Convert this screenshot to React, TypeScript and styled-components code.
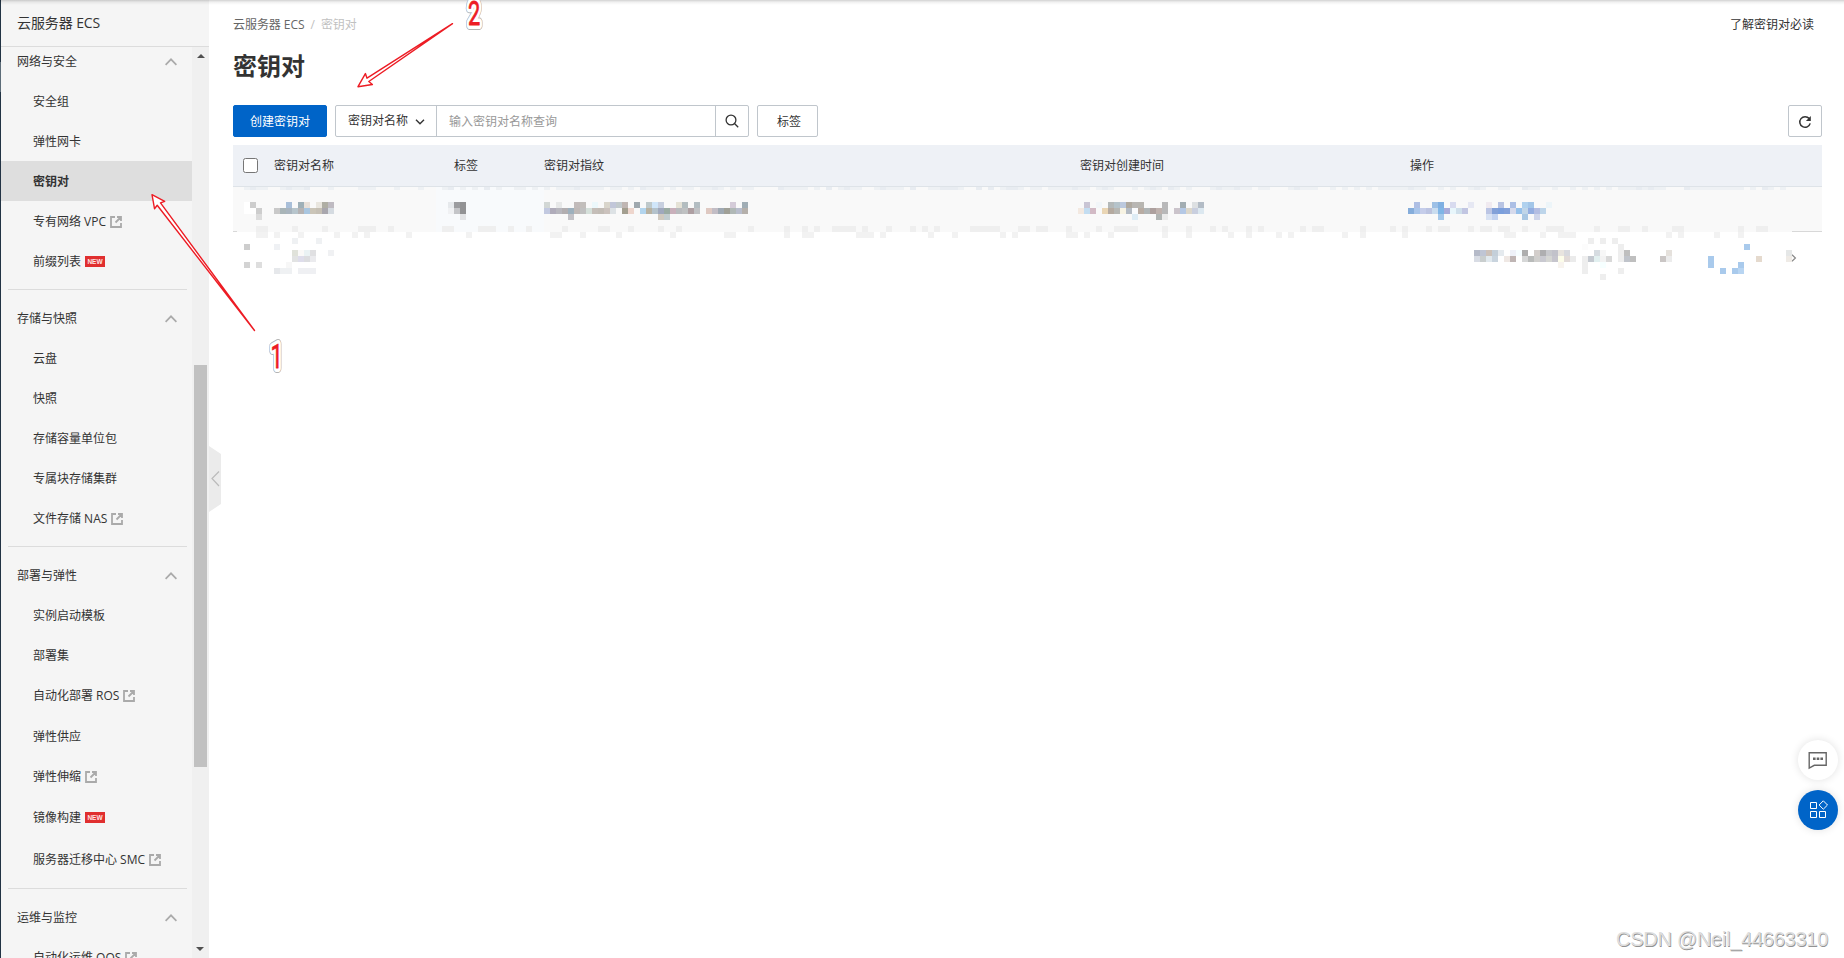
import React from "react";
import styled, { createGlobalStyle, css } from "styled-components";

const GlobalStyle = createGlobalStyle`
  * { box-sizing: border-box; }
  body {
    margin: 0;
    background: #fff;
    color: #333;
    font: 12px/20px "Open Sans", "Noto Sans CJK SC", sans-serif;
    overflow: hidden;
  }
  button, input { font: inherit; color: inherit; }
`;

const Page = styled.div`
  position: relative;
  display: flex;
  height: 958px;
  width: 1844px;
  overflow: hidden;
`;

const TopShadow = styled.div`
  position: absolute;
  inset: 0 0 auto 0;
  height: 5px;
  background: linear-gradient(rgba(0, 0, 0, 0.18), rgba(0, 0, 0, 0.06) 40%, rgba(0, 0, 0, 0));
`;

const Rail = styled.div`
  width: 1px;
  background: linear-gradient(#223344 62px, #5c6c78 62px, #5c6c78 92px, #223344 92px);
`;

const Sidebar = styled.aside`
  width: 208px;
  display: flex;
  flex-direction: column;
  background: #f5f5f5;
`;

const SidebarTitle = styled.div`
  height: 47px;
  padding: 13px 0 0 16px;
  font-size: 14px;
  letter-spacing: -0.1px;
  border-bottom: 1px solid #dcdcdc;
`;

const SidebarBody = styled.div`
  flex: 1;
  min-height: 0;
  display: flex;
`;

const Nav = styled.nav`
  width: 191px;
  overflow: hidden;
`;

const NavList = styled.div`
  margin-top: -5px;
`;

const NavHeader = styled.div`
  height: 40px;
  padding: 0 15px 0 16px;
  display: flex;
  align-items: center;
  justify-content: space-between;
`;

const NavItem = styled.div<{ $active?: boolean; $height?: number }>`
  height: ${(p) => p.$height ?? 40}px;
  padding-left: 32px;
  display: flex;
  align-items: center;
  gap: 4px;
  white-space: nowrap;
  ${(p) =>
    p.$active &&
    css`
      margin: -1px 0 1px;
      padding-top: 1px;
      background: #dedede;
      font-weight: 600;
    `}
`;

const NavDivider = styled.div`
  height: 1px;
  margin: 7px 5px 9px 7px;
  background: #dcdcdc;
`;

const NewBadge = styled.span`
  width: 20px;
  height: 11px;
  margin-top: -1px;
  background: #e02f2f;
  color: #ffe3e3;
  font: 700 6.5px/11px "Liberation Sans", sans-serif;
  text-align: center;
`;

const Scrollbar = styled.div`
  width: 17px;
  display: flex;
  flex-direction: column;
  align-items: center;
  background: #f0f0f0;
`;

const ScrollArrow = styled.div<{ $down?: boolean }>`
  width: 17px;
  height: 17px;
  display: flex;
  justify-content: center;
  align-items: center;
  transform: ${(p) => (p.$down ? "rotate(180deg)" : "none")};
`;

const ScrollTrack = styled.div`
  flex: 1;
  padding-top: 301px;
`;

const ScrollThumb = styled.div`
  width: 13px;
  height: 402px;
  background: #c1c1c1;
`;

const CollapseHandle = styled.div`
  position: absolute;
  left: 209px;
  top: 446px;
  height: 66px;
`;

const Main = styled.main`
  flex: 1;
  padding: 15px 22px 0 24px;
`;

const TopLine = styled.div`
  display: flex;
  justify-content: space-between;
  height: 20px;
  padding-right: 8px;
`;

const Breadcrumb = styled.div`
  color: #666;
  letter-spacing: -0.05px;
  span { color: #c1c1c1; }
  i { color: #c1c1c1; font-style: normal; margin: 0 6px; }
`;

const Title = styled.h1`
  margin: 11px 0 19px;
  font-size: 24px;
  line-height: 40px;
  font-weight: 700;
`;

const Toolbar = styled.div`
  display: flex;
  align-items: center;
  height: 32px;
`;

const Button = styled.button<{ $primary?: boolean; $width: number }>`
  width: ${(p) => p.$width}px;
  height: 32px;
  padding: 1px 0 0;
  display: flex;
  align-items: center;
  justify-content: center;
  border-radius: 2px;
  border: 1px solid ${(p) => (p.$primary ? "#0064c8" : "#c0c6cc")};
  background: ${(p) => (p.$primary ? "#0064c8" : "#fff")};
  color: ${(p) => (p.$primary ? "#fff" : "#333")};
`;

const TagButton = styled(Button)`
  padding-left: 3px;
`;

const SearchGroup = styled.div`
  width: 414px;
  height: 32px;
  margin: 0 8px;
  display: flex;
  border: 1px solid #c0c6cc;
  border-radius: 2px;
`;

const FieldSelect = styled.div`
  width: 101px;
  padding: 0 11px 1px 12px;
  display: flex;
  align-items: center;
  justify-content: space-between;
  border-right: 1px solid #c0c6cc;
  svg { margin-top: 3px; }
`;

const SearchInput = styled.input`
  flex: 1;
  min-width: 0;
  padding: 2px 11px 0 12px;
  border: 0;
  outline: 0;
  background: none;
  &::placeholder { color: #999; }
`;

const SearchButton = styled.div`
  width: 33px;
  display: flex;
  align-items: center;
  justify-content: center;
  border-left: 1px solid #c0c6cc;
`;

const Spacer = styled.div`
  flex: 1;
`;

const Table = styled.div`
  margin-top: 8px;
`;

const TableHead = styled.div`
  display: grid;
  grid-template-columns: 41px 180px 90px 536px 330px 1fr;
  align-items: center;
  height: 42px;
  background: #eef1f6;
  border-bottom: 1px solid #dee3e8;
  span { padding-top: 1px; }
`;

const Checkbox = styled.input`
  appearance: none;
  width: 15px;
  height: 15px;
  margin: 0 0 0 10px;
  display: block;
  background: #fff;
  border: 1px solid #767676;
  border-radius: 2.5px;
`;

const TableBody = styled.div`
  position: relative;
`;

const TableRow = styled.div`
  height: 45px;
  background:
    linear-gradient(#d8d8d8, #d8d8d8) left bottom / 4px 1px no-repeat,
    linear-gradient(#d8d8d8, #d8d8d8) right bottom / 30px 1px no-repeat,
    #f9f9f9;
`;

const RowPager = styled.div`
  height: 45px;
  padding: 22px 25px 0 0;
  display: flex;
  justify-content: flex-end;
`;

const Mosaic = styled.svg`
  position: absolute;
  left: -13px;
  top: 0;
`;

const Annotations = styled.svg`
  position: absolute;
  left: 0;
  top: 0;
  pointer-events: none;
`;

const FloatingActions = styled.div`
  position: absolute;
  right: 6px;
  top: 740px;
  display: flex;
  flex-direction: column;
  gap: 10px;
`;

const RoundAction = styled.div<{ $primary?: boolean }>`
  width: 40px;
  height: 40px;
  border-radius: 50%;
  display: flex;
  align-items: center;
  justify-content: center;
  background: ${(p) => (p.$primary ? "#0064c8" : "#fff")};
  box-shadow: 0 0 8px rgba(0, 0, 0, 0.12);
`;

const Watermark = styled.div`
  position: absolute;
  right: 16px;
  top: 926px;
  font: 20px/26px "Liberation Sans", sans-serif;
  letter-spacing: -0.27px;
  color: #dedede;
  text-shadow: 0.7px 0.7px 0 #929292;
`;

const ExternalIcon = () => (
  <svg width="12" height="12" viewBox="0 0 12 12" fill="none" stroke="#aaa" strokeWidth="1.8">
    <path d="M5 1H1v10h10V7M7 1h4v4M11 1 5.5 6.5" />
  </svg>
);

const FoldIcon = () => (
  <svg width="12" height="8" viewBox="0 0 12 8" fill="none" stroke="#aaa" strokeWidth="1.7">
    <path d="M.6 6.8 6 1.3l5.4 5.5" />
  </svg>
);

type Item = { label: string; external?: boolean; fresh?: boolean; active?: boolean; height?: number };
const sections: { title: string; items: Item[] }[] = [
  {
    title: "网络与安全",
    items: [
      { label: "安全组" },
      { label: "弹性网卡" },
      { label: "密钥对", active: true },
      { label: "专有网络 VPC", external: true },
      { label: "前缀列表", fresh: true },
    ],
  },
  {
    title: "存储与快照",
    items: [
      { label: "云盘" },
      { label: "快照" },
      { label: "存储容量单位包" },
      { label: "专属块存储集群" },
      { label: "文件存储 NAS", external: true },
    ],
  },
  {
    title: "部署与弹性",
    items: [
      { label: "实例启动模板" },
      { label: "部署集" },
      { label: "自动化部署 ROS", external: true },
      { label: "弹性供应", height: 41 },
      { label: "弹性伸缩", external: true },
      { label: "镜像构建", fresh: true, height: 42 },
      { label: "服务器迁移中心 SMC", external: true, height: 42 },
    ],
  },
  { title: "运维与监控", items: [{ label: "自动化运维 OOS", external: true }] },
];

/* Redaction mosaic on a 6px grid: [row, first column, cell colours]; "-" leaves a cell clear. */
const blocks: [number, number, string][] = [
  [10, 4, "fff cdcdcd"],
  [11, 4, "fff fff cdcdcd"],
  [12, 6, "dcdcdc"],
  [10, 11, "a9bfd9 - 9fb0b8 e8e0d9 - e9e6df afaea4 bfbbc2"],
  [11, 9, "c9c9c9 a9b5b8 a9b5bf b7c5cc b5b3b4 a9c6e0 cbc5b8 c6c0b5 a9a7ae d5dbe1"],
  [10, 38, "e6e9ec 9b9c9f 929294"],
  [11, 38, "f0f1f3 c4c5c8 929294"],
  [12, 40, "e2e3e5"],
  [10, 54, "d2d7d5 - e7e8e8 - - c2bbba c2bebb - ecf8fb - d9d5cb c2c7d9 c2cacd c0b6b3 - 9fa8ae - bfc9cb d0e6fa c7cfdf - - e5e2d6 b3bdc0 - b3bdc2 - - - - - d4cbd8 - a0adb5"],
  [11, 54, "c2c9e0 b0acba b8b7be b2aeb0 9db0bd bfb9b7 c0c0c0 d5e0da c5beb8 c2bcb5 cbc2bd dde2e5 - a39f90 eed6cd - b3d5ee b8b2a2 b4c2cb 9fa8bd 9aaba3 c9b0bb b9bbbe bfc1c2 ae9fa2 c0c1c4 - dfc9c2 c2bdc5 9fa9b3 a0a097 b0b8b6 b8bdcc b5b0ab"],
  [12, 58, "c3c2c7"],
  [12, 73, "d0c9bf c2cdd0"],
  [10, 144, "c9c5d4 - f2f6f9 - b4b9b9 b5c3ca bcc9de afa9a0 b8b6b3 b8b6b1 - - - b8b8b9 - - a2adb2 - dde0e2 b3bcc6"],
  [11, 143, "f3e9e1 c3ddf1 d2bac5 - ead6b5 b5aaa0 b7b7b3 f7f3e3 b3bac3 fafbfd b8aca3 b0b5b6 ada09e bfb2ae b8b8b9 - cbc4cb b4c8e5 dcd7cb c9cfdf dce8f0"],
  [12, 152, "deecf5 - - - b1b5b4 ebebeb"],
  [10, 199, "aebfe4 - - 9dc0e6 7fb0e2 - d8dbef - - e6e8f3 - - f0eaf0 - b8c4e3 - acbfe5 - b0d1ee a3c6e8 - - edf5f9"],
  [11, 198, "85addb a9c5ea c5cdea bcc4e2 c9dcef 7fb5e6 a9acda e8f6fb cfdfeb c2c6e2 - - - bbc5e4 83a1d8 7b9fdc 83a1da d6daec 96c0ea c0d5e8 93ade0 b3bde2 bdd5ea"],
  [12, 203, "a5c8ea - - - - - - - d8e2f3 c3d3f0 - - - - a9c7e3 - cfd5ea"],
  [16, 12, "eff1f3 - - - eff1f3"],
  [16, 228, "eeeeee - eeeeee - eeeeee"],
  [17, 4, "cdcdcd - - - - eff1f4"],
  [17, 227, "fcfcfc - - - - - eeeeee"],
  [17, 254, "a9caec"],
  [18, 12, "e0e2da faf9f8 eaf2f4 e0e0e2 - - f0f1f3"],
  [18, 209, "b5bac8 bfc5d4 ccc1b9 c4cfd9 e5eaee - eef1f8 f6fdff aeaeae - d3cecb aeaeb0 c8c9cd c2c2ca e8e4df d8d9de - - - - d6dce1 f7f7f7 - - eeeeee bfbfbf - - - - - - e5e1dc"],
  [18, 261, "e5e7e7"],
  [19, 12, "e2e3e3 deddeb dcdde0 ebebee"],
  [19, 209, "d8dce4 c9cece e1e9ee c9d4de - efe8e4 bfb5b4 - d6d7d7 b9bbba d0cfcd c9c9d0 d5d6d3 c6c5cd fdfdea e1dad8 ebebeb - eeeeee c4c9d0 e2f0f0 f3f3f3 d9d9d9 - eeeeee c0c4cb bfbfbf - - - - cac6c5 ececec - - - - - - a9caec - - - - - - - e5dace - - - - efebe6"],
  [20, 4, "d3d3d3 - dedede - - - - f7f7f7"],
  [20, 223, "f8f4ef - - - eeeeee - - f6ffff"],
  [20, 248, "a9caec - - - - a9caec"],
  [21, 9, "e6e8eb eff1f3 eff1f3 - eff0f3 eff0f3 eff0f3"],
  [21, 227, "eeeeee - - - - - eeeeee"],
  [21, 250, "a9caec - a9caec b8d5f2"],
  [22, 230, "eeeeee"],
];

/* Dashed leftovers of the row edges: column ranges per mosaic row. */
const edges: [number, string, string][] = [
  [7, "#eef1f4", "4-7 10-14 18 23-25 29 33 37-38 40 42 44 46 49-50 52 54 56-63 65-66 68 70-73 75 77-78 80-83 85 87-88 93-97 99 101 103-106 109-113 115 118-123 126 128 130-133 135-136 138-144 146-148 152 154-156 158-159 161 165-171 173-174 178-182 185 187 189 191 193-200 203 205 208-210 213-214 217-219 222 225 227 229 231 233-240 244-253 255 257-258 260"],
  [7, "#e8ecf1", "5 11 14 38 44 59 70 82 93 101 104 110 115 120-122 126 128 131-132 142 147 155 158 166 169 179 198 209 217 236 238 244 257"],
  [14, "#efefef", "6-7 12 17 23-25 28 37-38 43-45 48 51 57 63-64 68 73 76 88 94 97 99 102-105 107 111 115 117 119 125-129 133-134 136-137 141 146 149-152 157 161 165 167 171 173 180 182-183 190 195 197 201 203-204 208 210-211 213-214 217 221-223 229 233-234 237 242-243 253 256-257"],
  [15, "#f2f2f2", "6-7 9 13 19 22 24 31 41 55-56 60 66 75 84-85 94 97-98 106-108 110 118 122 130 132 141-142 144 148 157 161 168 171 176 178 187 190 197 214-215 220 223-225 241 243 249 253"],
];

const rowY = (r: number) => 142 + 6 * r - 187;

const RedactedCells = () => (
  <Mosaic width="1610" height="100" shapeRendering="crispEdges">
    <rect x={36 * 6} y="0" width={18 * 6} height="45" fill="#f8fafc" />
    {edges.flatMap(([r, fill, ranges]) =>
      ranges.split(" ").map((range) => {
        const [a, b = a] = range.split("-").map(Number);
        return <rect key={`${r}${fill}${range}`} x={a * 6} y={rowY(r)} width={(b - a + 1) * 6} height="6" fill={fill} />;
      })
    )}
    {blocks.flatMap(([r, k, colours]) =>
      colours.split(" ").map((c, i) =>
        c === "-" ? null : (
          <rect key={`${r}-${k + i}`} x={(k + i) * 6} y={rowY(r)} width="6" height="6" fill={`#${c}`} />
        )
      )
    )}
  </Mosaic>
);

const StepNumber = ({ x, y, children }: { x: number; y: number; children: string }) => (
  <g
    transform={`translate(${x} ${y}) scale(.64 1)`}
    fontFamily="Roboto, sans-serif"
    fontSize="34"
    textAnchor="middle"
    strokeLinejoin="round"
  >
    <text stroke="#b4b4b4" strokeWidth="10" filter="url(#soft)">{children}</text>
    <text stroke="#fff" strokeWidth="8">{children}</text>
    <text fill="#ed1c24" stroke="#ed1c24" strokeWidth="0.8">{children}</text>
  </g>
);

export default function App() {
  return (
    <>
      <GlobalStyle />
      <Page>
        <Rail />
        <Sidebar>
          <SidebarTitle>云服务器 ECS</SidebarTitle>
          <SidebarBody>
            <Nav>
              <NavList>
                {sections.map((s, i) => (
                  <React.Fragment key={s.title}>
                    {i > 0 && <NavDivider />}
                    <NavHeader>
                      {s.title}
                      <FoldIcon />
                    </NavHeader>
                    {s.items.map((it) => (
                      <NavItem key={it.label} $active={it.active} $height={it.height}>
                        {it.label}
                        {it.external && <ExternalIcon />}
                        {it.fresh && <NewBadge>NEW</NewBadge>}
                      </NavItem>
                    ))}
                  </React.Fragment>
                ))}
              </NavList>
            </Nav>
            <Scrollbar>
              <ScrollArrow>
                <svg width="8" height="4" viewBox="0 0 8 4"><path d="M0 4 4 0l4 4z" fill="#505050" /></svg>
              </ScrollArrow>
              <ScrollTrack><ScrollThumb /></ScrollTrack>
              <ScrollArrow $down>
                <svg width="8" height="4" viewBox="0 0 8 4"><path d="M0 4 4 0l4 4z" fill="#505050" /></svg>
              </ScrollArrow>
            </Scrollbar>
          </SidebarBody>
        </Sidebar>

        <Main>
          <TopLine>
            <Breadcrumb>云服务器 ECS<i>/</i><span>密钥对</span></Breadcrumb>
            <div>了解密钥对必读</div>
          </TopLine>
          <Title>密钥对</Title>
          <Toolbar>
            <Button $primary $width={94}>创建密钥对</Button>
            <SearchGroup>
              <FieldSelect>
                密钥对名称
                <svg width="10" height="6" viewBox="0 0 10 6" fill="none" stroke="#333" strokeWidth="1.4">
                  <path d="m1 .8 4 4 4-4" />
                </svg>
              </FieldSelect>
              <SearchInput placeholder="输入密钥对名称查询" />
              <SearchButton>
                <svg width="14" height="14" viewBox="0 0 14 14" fill="none" stroke="#333" strokeWidth="1.3">
                  <circle cx="6" cy="6" r="4.9" />
                  <path d="m9.5 9.5 3.7 3.7" />
                </svg>
              </SearchButton>
            </SearchGroup>
            <TagButton $width={61}>标签</TagButton>
            <Spacer />
            <Button $width={34}>
              <svg width="14" height="14" viewBox="0 0 14 14" fill="none" stroke="#333" strokeWidth="1.5">
                <path d="M11.2 3.6A5.3 5.3 0 1 0 12.2 8.4" />
                <path d="M12.8 1v5H7.9z" fill="#333" stroke="none" />
              </svg>
            </Button>
          </Toolbar>
          <Table>
            <TableHead>
              <Checkbox type="checkbox" />
              <span>密钥对名称</span>
              <span>标签</span>
              <span>密钥对指纹</span>
              <span>密钥对创建时间</span>
              <span>操作</span>
            </TableHead>
            <TableBody>
              <TableRow />
              <RowPager>
                <svg width="6" height="8" viewBox="0 0 6 8" fill="none" stroke="#888" strokeWidth="1.2">
                  <path d="m1 .8 3.4 3.2L1 7.2" />
                </svg>
              </RowPager>
              <RedactedCells />
            </TableBody>
          </Table>
        </Main>

        <CollapseHandle>
          <svg width="12" height="66" viewBox="0 0 12 66">
            <path d="M0 0 12 8v50L0 66z" fill="#ebebeb" />
            <path d="M10 25.5 3 32.5l7 7.5" fill="none" stroke="#bbb" strokeWidth="1.2" />
          </svg>
        </CollapseHandle>

        <TopShadow />

        <FloatingActions>
          <RoundAction>
            <svg width="20" height="20" viewBox="0 0 20 20" fill="none" stroke="#666" strokeWidth="1.4">
              <path d="M1.2 2.7h17v12.6H6.3L1.2 18z" />
              <path d="M5 8.8h2.6M8.7 8.8h2.6M12.4 8.8H15" strokeWidth="2.6" />
            </svg>
          </RoundAction>
          <RoundAction $primary>
            <svg width="20" height="20" viewBox="0 0 20 20" fill="none" stroke="#fff" strokeWidth="1">
              <path d="M2.5 2.5h6v6h-6zM2.5 11.5h6v6h-6zM11.5 11.5h6v6h-6zM15.3.8l4.2 4.2-4.2 4.2L11.1 5z" />
            </svg>
          </RoundAction>
        </FloatingActions>

        <Watermark>CSDN @Neil_44663310</Watermark>

        <Annotations width="1844" height="400">
          <defs>
            <filter id="soft" x="-50%" y="-50%" width="200%" height="200%">
              <feGaussianBlur stdDeviation="0.6" />
            </filter>
          </defs>
          <g fill="#fff" stroke="#ed1c24" strokeWidth="1.4" strokeLinejoin="round">
            <path d="M152 194.7 164.7 201.3 160.5 202.9 254.5 330.5 157.2 205.3 154.5 208.7z" />
            <path d="M358 86.7 365.4 73.6 367 78.2 452.5 23.7 368.8 81.5 372.4 84.5z" />
          </g>
          <StepNumber x={276.5} y={368}>1</StepNumber>
          <StepNumber x={474} y={24.5}>2</StepNumber>
        </Annotations>
      </Page>
    </>
  );
}
